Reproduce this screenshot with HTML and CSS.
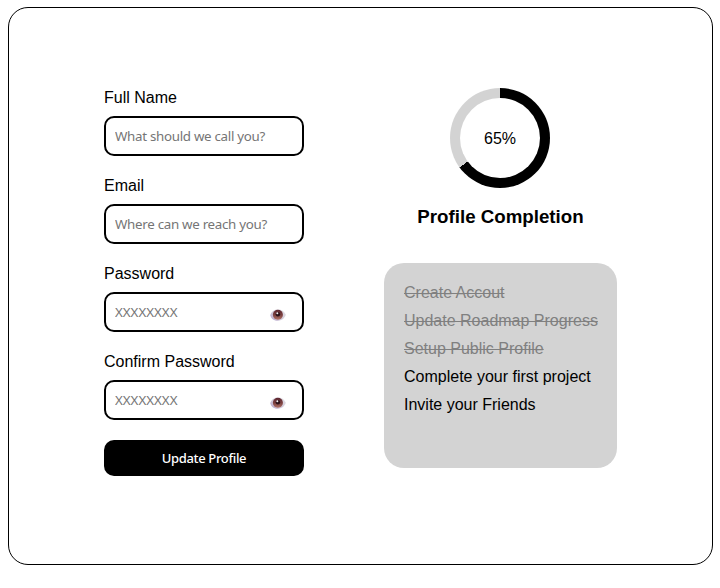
FILE: index.html
```html
<!DOCTYPE html>
<html lang="en">
<head>
<meta charset="utf-8">
<title>Update Profile</title>
<link rel="stylesheet" href="styles.css">
</head>
<body>
<svg class="defs" width="0" height="0" aria-hidden="true">
  <defs>
    <linearGradient id="sclera" x1="0" y1="1" x2="1" y2="0"><stop offset="0" stop-color="#b5a3cb"/><stop offset=".5" stop-color="#d3ccda"/><stop offset="1" stop-color="#e6e4e8"/></linearGradient>
    <linearGradient id="iris" x1="0" y1="0" x2="0" y2="1"><stop offset="0" stop-color="#5c2630"/><stop offset=".55" stop-color="#7c4140"/><stop offset="1" stop-color="#b17468"/></linearGradient>
    <symbol id="eye" viewBox="0 0 16 12">
      <path d="M.2 6.200C1.200 2.400 4.600.4 8 .4s6.400 1.800 7.800 5.400C14.400 9.800 11.200 11.700 7.800 11.700S1.200 10 .2 6.200z" fill="url(#sclera)"/>
      <circle cx="7.900" cy="5.700" r="5" fill="url(#iris)"/>
      <circle cx="7.900" cy="5.300" r="2.200" fill="#2b1119"/>
      <circle cx="7.300" cy="4.300" r="1" fill="#f3edf0"/>
    </symbol>
  </defs>
</svg>
<main class="card">
  <form class="form">
    <div class="field"><label for="name">Full Name</label><input id="name" type="text" placeholder="What should we call you?"></div>
    <div class="field"><label for="email">Email</label><input id="email" type="email" placeholder="Where can we reach you?"></div>
    <div class="field"><label for="password">Password</label>
      <div class="secret"><input id="password" type="password" placeholder="XXXXXXXX"><svg class="eye"><use href="#eye"/></svg></div></div>
    <div class="field"><label for="confirm">Confirm Password</label>
      <div class="secret"><input id="confirm" type="password" placeholder="XXXXXXXX"><svg class="eye"><use href="#eye"/></svg></div></div>
    <button class="submit" type="button">Update Profile</button>
  </form>
  <section class="progress">
    <div class="ring"><div class="ring-value">65%</div></div>
    <h3>Profile Completion</h3>
    <ul class="tasks">
      <li class="done">Create Accout</li>
      <li class="done">Update Roadmap Progress</li>
      <li class="done">Setup Public Profile</li>
      <li>Complete your first project</li>
      <li>Invite your Friends</li>
    </ul>
  </section>
</main>
</body>
</html>
```
FILE: styles.css
```css
* { box-sizing: border-box; }
body {
  margin: 7px 7px 0 8px;
  background: #fff;
  color: #000;
  font: 16px/18px "Liberation Sans", Arial, sans-serif;
}
.defs { display: block; }
.card {
  display: flex;
  gap: 80px;
  width: 705px;
  height: 558px;
  padding: 80px 95px;
  border: 1px solid #000;
  border-radius: 20px;
}
.form {
  display: flex;
  flex-direction: column;
  gap: 20px;
  width: 200px;
}
.field {
  display: flex;
  flex-direction: column;
  gap: 8px;
}
label {
  height: 20px;
  line-height: 20px;
}
input {
  display: block;
  width: 200px;
  height: 40px;
  padding: 0 9px;
  border: 2px solid #000;
  border-radius: 10px;
  background: #fff;
  font: 13.333px "Noto Sans", sans-serif;
  letter-spacing: -0.29px;
}
input[type="password"] { letter-spacing: 0; }
input::placeholder { color: #757575; }
.secret { position: relative; }
.eye {
  position: absolute;
  top: 17px;
  right: 18px;
  width: 16px;
  height: 12px;
}
.submit {
  height: 36px;
  padding: 0;
  border: 0;
  border-radius: 10px;
  background: #000;
  color: #fff;
  font: 500 13px "Noto Sans", sans-serif;
  letter-spacing: -0.35px;
}
.progress {
  display: flex;
  flex-direction: column;
  align-items: center;
  width: 233px;
}
.ring {
  display: grid;
  place-items: center;
  width: 100px;
  height: 100px;
  margin-right: 1px;
  border-radius: 50%;
  background: conic-gradient(#000 65%, #d3d3d3 0);
}
.ring-value {
  display: grid;
  place-items: center;
  width: 80px;
  height: 80px;
  padding-top: 2px;
  border-radius: 50%;
  background: #fff;
}
h3 {
  margin: 18px 0 35px;
  font-size: 18.72px;
  line-height: 22px;
}
.tasks {
  display: flex;
  flex-direction: column;
  gap: 10px;
  width: 233px;
  height: 205px;
  margin: 0;
  padding: 21px 20px 19px;
  border-radius: 20px;
  background: #d3d3d3;
  list-style: none;
  white-space: nowrap;
}
.done {
  color: #808080;
  text-decoration: line-through;
}
```
